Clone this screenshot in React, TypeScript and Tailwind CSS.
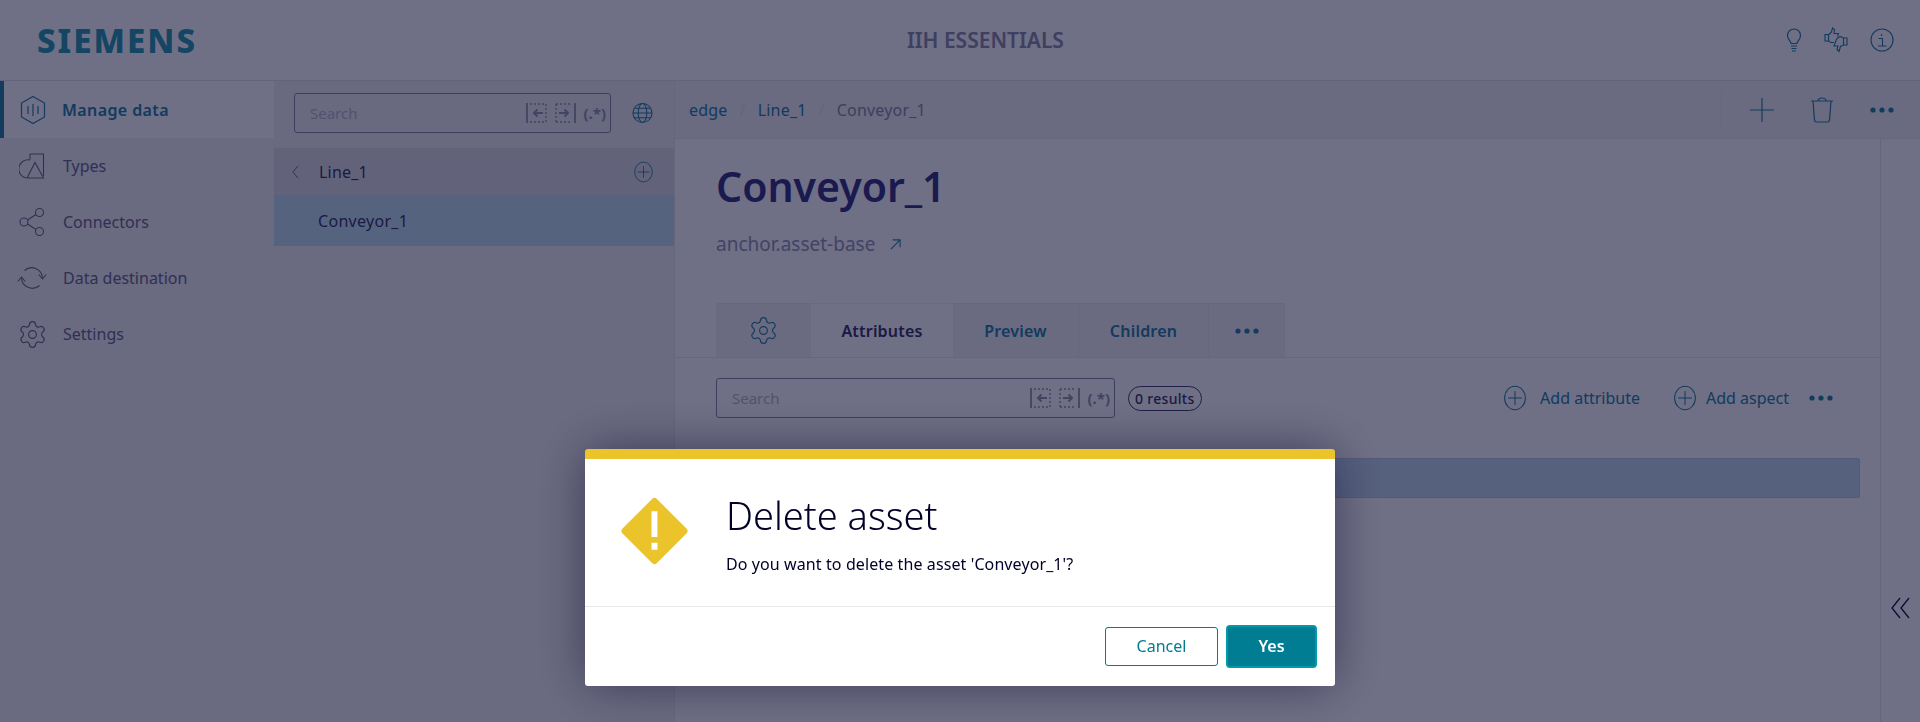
import React from "react";
import { Settings } from "lucide-react";

const font = "font-['Noto_Sans',sans-serif]";

const CircleIcon = ({ className = "" }: { className?: string }) => (
  <svg viewBox="0 0 26 30" className={className} fill="none" stroke="currentColor" strokeWidth="1.2">
    <ellipse cx="13" cy="15" rx="12" ry="13.5" />
    <path d="M13 7v16M5 15h16" />
  </svg>
);

const Dots = () => (
  <svg viewBox="0 0 24 6" className="w-6 h-[6px] text-[#2a88a2]" fill="currentColor">
    <circle cx="3" cy="3" r="2.6" />
    <circle cx="12" cy="3" r="2.6" />
    <circle cx="21" cy="3" r="2.6" />
  </svg>
);

const HexIcon = () => (
  <svg viewBox="0 0 26 30" className="w-[26px] h-[30px]" fill="none" stroke="currentColor" strokeWidth="1.2">
    <path d="M13 1.5 24.5 8v14L13 28.5 1.5 22V8z" />
    <path d="M8 11v8M13 9v12M18 11v8" />
  </svg>
);

const TypesIcon = () => (
  <svg viewBox="0 0 26 26" className="w-[26px] h-[26px]" fill="none" stroke="currentColor" strokeWidth="1.1">
    <path d="M11 1h13.500v22" />
    <path d="M11 1v5.500" />
    <path d="M11 7A9 9 0 0 0 7 25" />
    <path d="M16 9.500 24.500 25H8z" />
  </svg>
);

const ConnectorsIcon = () => (
  <svg viewBox="0 0 26 28" className="w-[26px] h-[28px]" fill="none" stroke="currentColor" strokeWidth="1.1">
    <circle cx="5" cy="14" r="4" />
    <circle cx="20.5" cy="4.5" r="4" />
    <circle cx="20.5" cy="23.5" r="4" />
    <path d="m8.5 12 8.5-5.5M8.5 16l8.5 5.5" />
  </svg>
);

const SyncIcon = () => (
  <svg viewBox="0 0 30 24" className="w-[30px] h-[24px]" fill="none" stroke="currentColor" strokeWidth="1.1">
    <path d="M7.500 4.500A10.800 10.800 0 0 1 25.500 12.500" />
    <path d="M22.500 19.500A10.800 10.800 0 0 1 4.500 11.500" />
    <path d="m0.800 15.500 3.700-4.500 3.700 4.500M21.800 8.500l3.700 4.500 3.700-4.500" />
  </svg>
);

const BulbIcon = () => (
  <svg viewBox="0 0 16 24" className="w-[16px] h-[24px]" fill="none" stroke="currentColor" strokeWidth="1.2">
    <path d="M5 15.500c0-2.500-3.500-3.500-3.500-8a6.500 6.500 0 0 1 13 0c0 4.500-3.500 5.500-3.500 8z" />
    <path d="M5 18h6M5.500 20.500h5M6 23h4" />
  </svg>
);

const ThumbsIcon = () => (
  <svg viewBox="0 0 24 26" className="w-[24px] h-[26px]" fill="none" stroke="currentColor" strokeWidth="1.1">
    <path d="M1 7.500h3.500v6.500H1zM4.500 8 7.500 5 8.500 1l2 1.500-.5 4h4.500l-1 3M4.500 14l2.500 1.500h3" />
    <path d="M19.500 11H23v7h-3.500zM19.500 18l-3 1.500-1.500 5-2-2 1-3.500H10l2.500-7 3.500-2.500 3.500 1.500" />
  </svg>
);

const InfoIcon = () => (
  <svg viewBox="0 0 24 24" className="w-[24px] h-[24px]" fill="none" stroke="currentColor" strokeWidth="1.1">
    <circle cx="12" cy="12" r="11" />
    <path d="M8.500 10.500H12.500V18M8 18h8.500M11.500 6v2" />
  </svg>
);

const GlobeIcon = () => (
  <svg viewBox="0 0 22 22" className="w-[21px] h-[22px]" fill="none" stroke="currentColor" strokeWidth="1.1">
    <circle cx="11" cy="11" r="10" />
    <ellipse cx="11" cy="11" rx="4.500" ry="10" />
    <path d="M1 11h20M2.500 6h17M2.500 16h17" />
  </svg>
);

const SearchTools = () => (
  <div className="flex items-center gap-[7px] text-[#9a9ab0]">
    <svg viewBox="0 0 50 20" className="w-[50px] h-[20px]" fill="none" stroke="currentColor">
      <path d="M1 0v20" strokeWidth="1.8" />
      <path d="M4 1h16M4 19h16M30 1h16M30 19h16M20 1v18M30 1v18" strokeWidth="1.4" strokeDasharray="2 2" />
      <path d="M17 10H8m3.500-3.500L8 10l3.500 3.500M33 10h9m-3.500-3.500L42 10l-3.500 3.500" strokeWidth="2" />
      <path d="M49 0v20" strokeWidth="1.8" />
    </svg>
    <span className="text-[15px] font-bold leading-none">(.*)</span>
  </div>
);

const SearchBox = ({ width }: { width: string }) => (
  <div className={`${width} h-10 border border-[#8f8fa8] rounded-[3px] flex items-center justify-between pl-[15px] pr-[4px]`}>
    <span className="text-[15px] text-[#bdbdc9]">Search</span>
    <SearchTools />
  </div>
);

const navItems = [
  { label: "Types", icon: <TypesIcon /> },
  { label: "Connectors", icon: <ConnectorsIcon /> },
  { label: "Data destination", icon: <SyncIcon /> },
  { label: "Settings", icon: <Settings size={31} strokeWidth={0.9} /> },
];

export default function App() {
  return (
    <div className={`${font} h-screen overflow-hidden bg-white text-[#000028] flex flex-col`}>
      <header className="h-[81px] shrink-0 border-b border-[#e4e4e8] flex items-center pl-[37px] pr-[26px]">
        <div className="w-[520px] text-[33px] leading-none font-extrabold tracking-[2px] text-[#2fa0b2]">SIEMENS</div>
        <div className="w-[640px] ml-[350px] pt-[2px] text-[21px] font-semibold text-[#9090a8]">IIH ESSENTIALS</div>
        <div className="ml-auto flex items-center gap-[22px] text-[#2a88a2]">
          <BulbIcon />
          <ThumbsIcon />
          <InfoIcon />
        </div>
      </header>

      <div className="flex-1 flex min-h-0">
        <nav className="w-[274px] shrink-0 bg-[#f4f4f4]">
          <div className="h-[57px] bg-white border-l-[4px] border-[#2a88a2] flex items-center gap-[16px] pl-[16px] text-[#2a88a2]">
            <HexIcon />
            <span className="text-[16px] font-semibold tracking-[0.4px]">Manage data</span>
          </div>
          {navItems.map((item) => (
            <div key={item.label} className="h-14 flex items-center text-[#6e6e8a]">
              <div className="w-[63px] shrink-0 flex justify-center pl-[1px]">{item.icon}</div>
              <span className="text-[16px]">{item.label}</span>
            </div>
          ))}
        </nav>

        <section className="w-[401px] shrink-0 bg-[#f4f4f4] border-r border-[#ebebee]">
          <div className="h-[67px] bg-[#f0f0f2] flex items-start pt-3 pl-5 gap-[21px]">
            <SearchBox width="w-[317px]" />
            <span className="mt-[9px] text-[#2a88a2]"><GlobeIcon /></span>
          </div>
          <div className="h-[47px] bg-[#e2e2e3] flex items-center pl-[17px] pr-5 text-[#3d3d66]">
            <svg viewBox="0 0 10 18" className="w-[9px] h-[16px] text-[#6e6e8a]" fill="none" stroke="currentColor" strokeWidth="1.1">
              <path d="M8 2 2 9l6 7" />
            </svg>
            <span className="ml-[19px] text-[16px] tracking-[0.2px]">Line_1</span>
            <CircleIcon className="ml-auto w-[21px] h-[22px] text-[#2a88a2]" />
          </div>
          <div className="h-[51px] bg-[#c6e4ef] flex items-center pl-11 text-[16px] tracking-[0.3px] text-[#3d3d66]">Conveyor_1</div>
        </section>

        <main className="flex-1 min-w-0 flex flex-col">
          <div className="h-[58px] shrink-0 bg-[#f4f4f4] border-b border-[#ebebee] flex items-center pl-[14px] pr-[26px] text-[16px] tracking-[0.2px]">
            <span className="text-[#2a88a2]">edge</span>
            <span className="mx-3 text-[#e8e8ea]">/</span>
            <span className="text-[#2a88a2]">Line_1</span>
            <span className="mx-3 text-[#e8e8ea]">/</span>
            <span className="text-[#8f8fa8]">Conveyor_1</span>
            <div className="ml-auto h-[38px] border-l border-[#ebebee] flex items-center gap-[36px] pl-[28px] text-[#2a88a2]">
              <svg viewBox="0 0 24 24" className="w-6 h-6" fill="none" stroke="currentColor" strokeWidth="1.2">
                <path d="M12 0v24M0 12h24" />
              </svg>
              <svg viewBox="0 0 24 26" className="w-6 h-[26px]" fill="none" stroke="currentColor" strokeWidth="1.2">
                <path d="M1 4h22M8 4c0-4 8-4 8 0M3 4l1.500 19q.2 2 2 2h11q1.800 0 2-2L21 4" />
              </svg>
              <Dots />
            </div>
          </div>

          <div className="flex-1 flex min-h-0">
            <div className="flex-1 min-w-0 pt-[21px]">
              <div className="pl-[41px]">
                <h1 className="text-[41px] leading-[52px] font-semibold text-[#3c3c80]">Conveyor_1</h1>
                <div className="mt-[16px] h-8 flex items-center gap-[15px] text-[#9a9ab0]">
                  <span className="text-[19px]">anchor.asset-base</span>
                  <svg viewBox="0 0 12 12" className="w-[11px] h-[11px] text-[#2a88a2]" fill="none" stroke="currentColor" strokeWidth="1.2">
                    <path d="M1 11 11 1M3 1h8v8" />
                  </svg>
                </div>
              </div>

              <div className="mt-[43px] border-b border-[#ebebee] pl-[41px]">
                <div className="flex h-[54px] w-[569px] text-[16px] font-semibold tracking-[0.2px] text-[#2a88a2]">
                  <div className="w-[95px] bg-[#f4f4f4] rounded-tl-[3px] flex items-center justify-center border-t border-[#ebebee]">
                    <Settings size={31} strokeWidth={0.9} />
                  </div>
                  <div className="w-[142px] flex items-center justify-center text-[#3d3d66] border-t border-[#f4f4f4]">Attributes</div>
                  <div className="w-[126px] bg-[#f4f4f4] flex items-center justify-center border-t border-r border-[#ebebee]">Preview</div>
                  <div className="w-[130px] bg-[#f4f4f4] flex items-center justify-center border-t border-r border-[#ebebee]">Children</div>
                  <div className="w-[76px] bg-[#f4f4f4] rounded-tr-[3px] flex items-center justify-center border-t border-[#ebebee]"><Dots /></div>
                </div>
              </div>

              <div className="mt-5 flex items-center pl-[41px] pr-[47px]">
                <SearchBox width="w-[399px]" />
                <span className="ml-[13px] h-[25px] px-[6px] rounded-full border border-[#4a4a70] flex items-center text-[14px] tracking-[0.3px] font-medium text-[#3d3d66]">0 results</span>
                <div className="ml-auto flex items-center text-[#2a88a2] text-[16px]">
                  <CircleIcon className="w-6 h-[26px]" />
                  <span className="ml-[13px]">Add attribute</span>
                  <CircleIcon className="ml-[33px] w-6 h-[26px]" />
                  <span className="ml-[9px]">Add aspect</span>
                  <span className="ml-[20px]"><Dots /></span>
                </div>
              </div>

              <div className="mt-[40px] ml-[41px] mr-5 h-10 rounded-[2px] bg-[#c6deec] border border-[#bcd2e2]" />
            </div>
            <aside className="w-10 shrink-0 border-l border-[#ebebee] flex items-center justify-center pt-[355px] text-[#1c1c40]">
              <svg viewBox="0 0 20 22" className="w-5 h-[22px]" fill="none" stroke="currentColor" strokeWidth="1.3">
                <path d="M9 1 1 11l8 10M18 1l-8 10 8 10" />
              </svg>
            </aside>
          </div>
        </main>
      </div>

      <div className="fixed inset-0 bg-[#000028]/[0.565] flex items-start justify-center pt-[449px]">
        <div className="w-[750px] h-[237px] bg-white rounded-[3px] overflow-hidden border-t-[10px] border-[#eac42a] shadow-[0_0_50px_rgba(0,0,40,0.45)] flex flex-col">
          <div className="h-[148px] border-b border-[#e8e8e8] flex pl-9">
            <svg viewBox="0 0 68 68" className="w-[67px] h-[68px] mt-[38px] shrink-0">
              <path d="M34 4 64 34 34 64 4 34z" fill="#eac42a" stroke="#eac42a" strokeWidth="7" strokeLinejoin="round" />
              <path d="M31 14h6v26h-6zM31 46h6v7h-6z" fill="#fff" />
            </svg>
            <div className="ml-[38px] pt-[31px]">
              <div className="text-[38px] leading-[50px] font-light text-[#000028]">Delete asset</div>
              <div className="mt-[14px] text-[16px] leading-5 tracking-[0.1px] text-[#000028]">Do you want to delete the asset 'Conveyor_1'?</div>
            </div>
          </div>
          <div className="flex-1 flex items-center justify-end gap-2 pr-[18px] pb-[1px]">
            <button className="w-[113px] h-[39px] rounded-[3px] border border-[#007c93] text-[16px] text-[#007c93]">Cancel</button>
            <button className="w-[91px] h-[43px] rounded-[4px] bg-[#007c93] border-2 border-[#009aa8] text-[16px] font-semibold text-white">Yes</button>
          </div>
        </div>
      </div>
    </div>
  );
}
